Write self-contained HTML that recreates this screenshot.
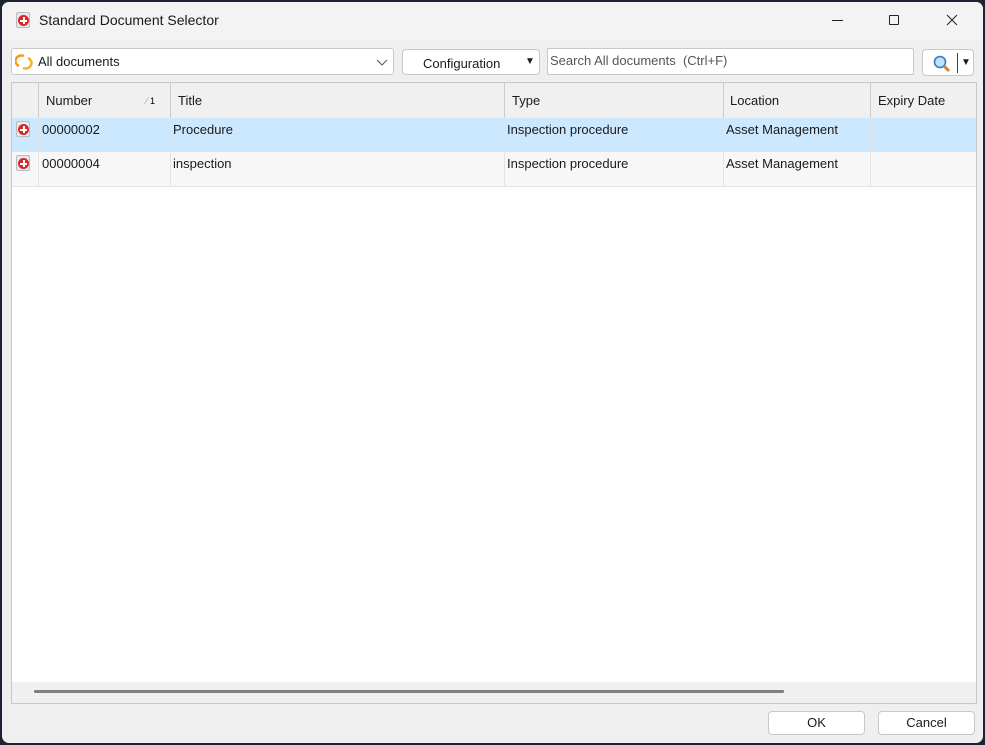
<!DOCTYPE html>
<html><head><style>
*{box-sizing:border-box;margin:0;padding:0}
body{width:985px;height:745px;background:#1b2430;font-family:"Liberation Sans",sans-serif;font-size:13px;color:#1a1a1a;position:relative;overflow:hidden}
.win{position:absolute;left:2px;top:2px;width:981px;height:741px;background:#efefef;border-radius:7px;overflow:hidden}
.ab{position:absolute}
.icon{width:14px;height:16px;background:#e8e8e8;border:1px solid #bbb;border-radius:2px}
.icon:after{content:"";position:absolute;left:1px;top:2px;width:11px;height:11px;border-radius:50%;background:#d8262e}
.icon i{position:absolute;left:3px;top:6.5px;width:7px;height:2px;background:#fff;z-index:1}
.icon b{position:absolute;left:5.5px;top:4px;width:2px;height:7px;background:#fff;z-index:1}
.box{background:#fff;border:1px solid #c8c8c8;border-radius:3px}
.cell{position:absolute;top:0;height:100%;padding-left:4px;line-height:23px;font-size:13px}
</style></head><body>
<div class="win">
<div class="ab" style="left:0;top:0;width:981px;height:38px;background:#f3f3f3"></div>
<div class="ab icon" style="left:14px;top:10px"><i></i><b></b></div>
<div class="ab" style="left:37px;top:10px;font-size:14px">Standard Document Selector</div>
<div class="ab" style="left:830px;top:18px;width:11px;height:1px;background:#222"></div>
<div class="ab" style="left:887px;top:13px;width:10px;height:10px;border:1px solid #222;border-radius:1px"></div>
<svg class="ab" style="left:944px;top:12px" width="12" height="12"><path d="M1 1L11 11M11 1L1 11" stroke="#222" stroke-width="1"/></svg>

<div class="ab box" style="left:9px;top:46px;width:383px;height:27px">
<svg class="ab" style="left:3px;top:5px" width="18" height="16" viewBox="0 0 18 16"><path d="M4 12 A6 5.5 0 0 1 9 2" stroke="#f39a1a" stroke-width="2.5" fill="none"/><path d="M13 4 A6 5.5 0 0 1 8 14" stroke="#f7b030" stroke-width="2.5" fill="none"/></svg>
<span class="ab" style="left:26px;top:5px">All documents</span>
<svg class="ab" style="left:364px;top:10px" width="12" height="8"><path d="M1 1l5 5 5-5" stroke="#555" fill="none"/></svg>
</div>
<div class="ab box" style="left:400px;top:47px;width:138px;height:26px;border-radius:4px"><span class="ab" style="left:20px;top:6px">Configuration</span><span class="ab" style="left:122px;top:6px;font-size:10px">▼</span></div>
<div class="ab box" style="left:545px;top:46px;width:367px;height:27px;border-radius:2px"><span class="ab" style="left:2px;top:4px;color:#555">Search All documents&nbsp; (Ctrl+F)</span></div>
<div class="ab box" style="left:920px;top:47px;width:52px;height:27px;border-radius:4px">
<svg class="ab" style="left:9px;top:4px" width="20" height="20"><circle cx="8" cy="8" r="5.5" fill="#bfe1fb" stroke="#3b78c4" stroke-width="1.6"/><path d="M12 12l5 5" stroke="#c98a2a" stroke-width="3"/></svg>
<div class="ab" style="left:34px;top:3px;width:1px;height:20px;background:#444"></div>
<span class="ab" style="left:38px;top:7px;font-size:10px">▼</span></div>

<div class="ab" style="left:9px;top:80px;width:966px;height:622px;background:#fff;border:1px solid #c8c8c8">
<div class="ab" style="left:0;top:0;width:964px;height:35px;background:#f0f0f0">
 <div class="ab" style="left:26px;top:0;width:1px;height:35px;background:#ccc"></div>
 <div class="cell" style="left:30px;top:6px">Number</div><span class="ab" style="left:134px;top:13px;font-size:9px;color:#999">⁄ <span style="color:#000">1</span></span>
 <div class="ab" style="left:158px;width:1px;height:35px;background:#ccc"></div><div class="cell" style="left:162px;top:6px">Title</div>
 <div class="ab" style="left:492px;width:1px;height:35px;background:#ccc"></div><div class="cell" style="left:496px;top:6px">Type</div>
 <div class="ab" style="left:711px;width:1px;height:35px;background:#ccc"></div><div class="cell" style="left:714px;top:6px">Location</div>
 <div class="ab" style="left:858px;width:1px;height:35px;background:#ccc"></div><div class="cell" style="left:862px;top:6px">Expiry Date</div>
</div>
<div class="ab" style="left:0;top:35px;width:964px;height:34px;background:#cce8ff">
 <div class="ab icon" style="left:4px;top:3px"><i></i><b></b></div>
 <div class="ab" style="left:26px;height:34px;width:1px;background:#e4e4e4"></div>
 <div class="cell" style="left:26px">00000002</div><div class="cell" style="left:157px">Procedure</div><div class="cell" style="left:491px">Inspection procedure</div><div class="cell" style="left:710px">Asset Management</div>
 <div class="ab" style="left:858px;height:34px;width:1px;background:#e4e4e4"></div>
</div>
<div class="ab" style="left:0;top:69px;width:964px;height:35px;background:#f7f7f7;border-bottom:1px solid #e4e4e4">
 <div class="ab icon" style="left:4px;top:3px"><i></i><b></b></div>
 <div class="ab" style="left:26px;height:35px;width:1px;background:#e4e4e4"></div>
 <div class="ab" style="left:158px;height:35px;width:1px;background:#e4e4e4"></div>
 <div class="ab" style="left:492px;height:35px;width:1px;background:#e4e4e4"></div>
 <div class="ab" style="left:711px;height:35px;width:1px;background:#e4e4e4"></div>
 <div class="ab" style="left:858px;height:35px;width:1px;background:#e4e4e4"></div>
 <div class="cell" style="left:26px">00000004</div><div class="cell" style="left:157px">inspection</div><div class="cell" style="left:491px">Inspection procedure</div><div class="cell" style="left:710px">Asset Management</div>
</div>
<div class="ab" style="left:0;top:599px;width:964px;height:21px;background:#f0f0f0"></div>
<div class="ab" style="left:22px;top:607px;width:750px;height:3px;background:#808080;border-radius:1px"></div>
</div>

<div class="ab box" style="left:766px;top:709px;width:97px;height:24px;border-radius:4px;text-align:center;line-height:22px">OK</div>
<div class="ab box" style="left:876px;top:709px;width:97px;height:24px;border-radius:4px;text-align:center;line-height:22px">Cancel</div>
</div>
</body></html>
